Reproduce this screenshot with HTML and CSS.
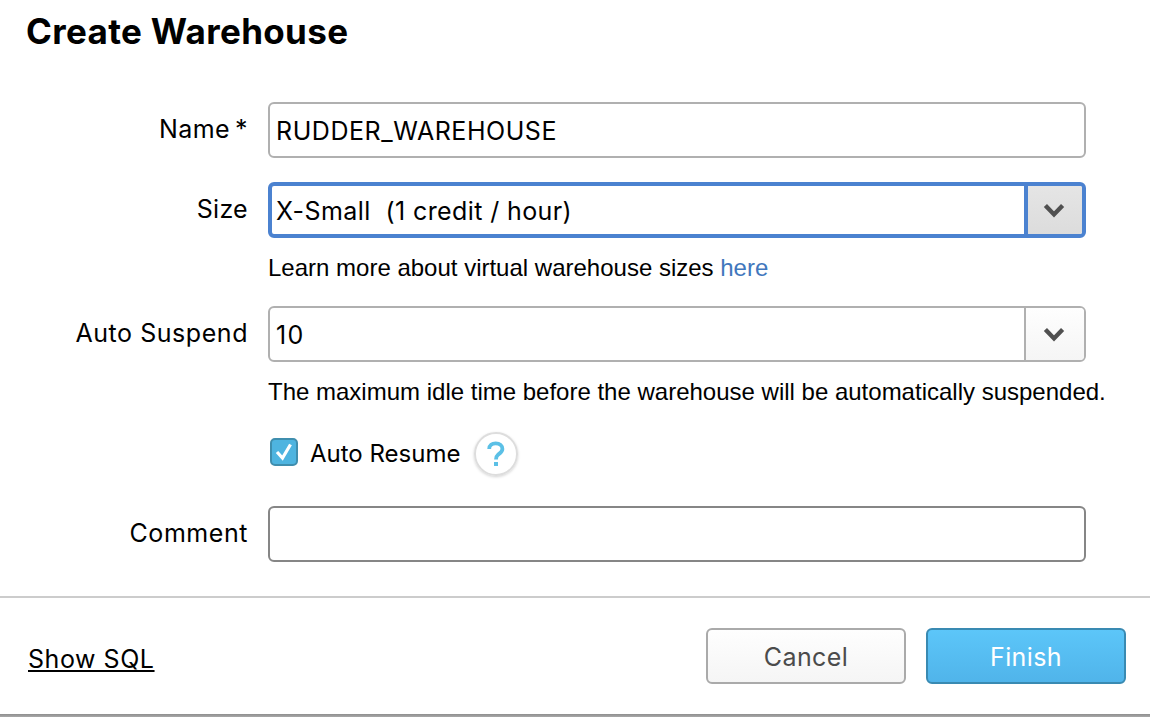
FILE: index.html
```html
<!DOCTYPE html>
<html lang="en">
<head>
<meta charset="utf-8">
<title>Create Warehouse</title>
<link rel="stylesheet" href="styles.css">
</head>
<body>
<main class="dialog">
  <h1 class="title">Create Warehouse</h1>
  <form class="form">
    <div class="row">
      <label class="label"><span class="name">Name</span><span class="required">*</span></label>
      <div class="field"><span class="value value-name">RUDDER_WAREHOUSE</span></div>
    </div>
    <div class="row row-size">
      <label class="label label-size">Size</label>
      <div class="field field-active">
        <span class="value">X-Small&nbsp; (1 credit / hour)</span>
        <span class="trigger"><svg class="chevron" viewBox="0 0 24 18"><path d="M3.4 3.4 L12 12.4 L20.6 3.4" /></svg></span>
      </div>
    </div>
    <p class="hint">Learn more about virtual warehouse sizes <a class="link">here</a></p>
    <div class="row">
      <label class="label">Auto Suspend</label>
      <div class="field">
        <span class="value value-number">10</span>
        <span class="trigger"><svg class="chevron" viewBox="0 0 24 18"><path d="M3.4 3.4 L12 12.4 L20.6 3.4" /></svg></span>
      </div>
    </div>
    <p class="hint">The maximum idle time before the warehouse will be automatically suspended.</p>
    <div class="resume">
      <span class="checkbox"><svg class="check" viewBox="0 0 24 24"><path d="M5 12 L10.5 18 L18.5 4.5" /></svg></span>
      <span class="resume-label">Auto Resume</span>
      <span class="help"><svg class="question" viewBox="0 0 20 28"><path d="M3.2 9 C3.2 5 6 3.4 9.7 3.4 C13.8 3.4 16.4 5.6 16.4 9 C16.4 12 14.2 13 12 14.7 C10.4 16 10 17 10 19.5" /><rect x="8" y="22" width="4" height="4" /></svg></span>
    </div>
    <div class="row">
      <label class="label">Comment</label>
      <div class="field field-comment"></div>
    </div>
  </form>
  <footer class="footer">
    <a class="show-sql">Show SQL</a>
    <div class="actions">
      <button class="button" type="button">Cancel</button>
      <button class="button button-primary" type="button">Finish</button>
    </div>
  </footer>
</main>
</body>
</html>
```

FILE: styles.css
```css
* { box-sizing: border-box; }
body {
  margin: 0;
  height: 717px;
  overflow: hidden;
  background: linear-gradient(#8e8e8e, #a9a9a9) 0 714px / 100% 3px no-repeat;
  font: 25px/32px Inter, "Liberation Sans", sans-serif;
  letter-spacing: .55px;
  color: #000;
}
.dialog {
  height: 714px;
  background: #fff;
  border-radius: 0 0 3px 3px;
  display: flex;
  flex-direction: column;
}
.title {
  margin: 0;
  height: 102px;
  padding: 9px 0 0 26px;
  font-size: 35px;
  line-height: 44px;
  font-weight: 650;
  letter-spacing: .35px;
}
.form { height: 494px; }
.row { display: flex; height: 56px; }
.row-size { margin-top: 24px; }
.label {
  width: 268px;
  padding: 11px 20px 0 0;
  text-align: right;
  white-space: nowrap;
}
.label-size { letter-spacing: .3px; }
.name { letter-spacing: .4px; }
.required { margin-left: 5px; }
.field {
  width: 818px;
  border: 2px solid #b0b0b0;
  border-radius: 6px;
  display: flex;
  justify-content: space-between;
  overflow: hidden;
}
.value { padding: 11px 0 0 6px; white-space: nowrap; letter-spacing: .4px; }
.value-name { letter-spacing: .55px; }
.value-number { letter-spacing: 1.4px; }
.trigger {
  width: 60px;
  padding-right: 1px;
  border-left: 2px solid #b0b0b0;
  background: linear-gradient(#fefefe, #f5f5f5);
  display: flex;
  align-items: center;
  justify-content: center;
}
.chevron { width: 24px; height: 18px; margin: 2px 2px 0 0; filter: blur(.5px); }
.chevron path { fill: none; stroke: #505050; stroke-width: 4.4; }
.field-active { border: 4px solid #4b82d0; }
.field-active .value { padding: 9px 0 0 4px; }
.field-active .trigger {
  width: 58px;
  padding-right: 1px;
  border-left: 4px solid #4b82d0;
  background: linear-gradient(#e5e5e5, #dcdcdc);
}
.field-comment { border-color: #868686; }
.hint {
  margin: 0;
  height: 68px;
  padding: 14px 0 0 268px;
  font: 24px/32px "Liberation Sans", Arial, sans-serif;
  letter-spacing: 0;
  white-space: nowrap;
}
.link { color: #4177bd; }
.resume {
  height: 76px;
  display: flex;
  align-items: flex-start;
  padding-left: 270px;
}
.checkbox {
  width: 28px;
  height: 28px;
  margin-top: 8px;
  border: 2px solid #3f8eae;
  border-radius: 5px;
  background: #4eb4e0;
}
.check { display: block; width: 24px; height: 24px; }
.check path { fill: none; stroke: #fff; stroke-width: 3.2; }
.resume-label {
  width: 176px;
  padding: 8px 0 0 12px;
  font-size: 24px;
  letter-spacing: 0;
  white-space: nowrap;
}
.help {
  width: 44px;
  height: 44px;
  margin-top: 2px;
  border: 2px solid #ddd;
  border-radius: 50%;
  box-shadow: 0 1px 3px rgba(0, 0, 0, .18);
  display: flex;
  align-items: center;
  justify-content: center;
}
.question { width: 20px; height: 28px; }
.question path { fill: none; stroke: #5bc0e6; stroke-width: 3.8; }
.question rect { fill: #5bc0e6; }
.footer {
  height: 118px;
  border-top: 2px solid #ccc;
  display: flex;
  justify-content: space-between;
  align-items: flex-start;
  padding: 30px 24px 0 28px;
}
.show-sql {
  margin-top: 15px;
  text-decoration: underline;
  text-decoration-thickness: 2px;
  text-underline-offset: 2px;
  text-decoration-skip-ink: none;
}
.actions { display: flex; gap: 20px; }
.button {
  width: 200px;
  height: 56px;
  padding: 2px 0 0;
  border: 2px solid #aaa;
  border-radius: 6px;
  background: linear-gradient(#fefefe, #f5f5f5);
  color: #4b4b4b;
  font: inherit;
  letter-spacing: .4px;
}
.button-primary {
  border-color: #398ab2;
  background: linear-gradient(#5cc6f9, #50b4ea);
  color: #fff;
}
```
